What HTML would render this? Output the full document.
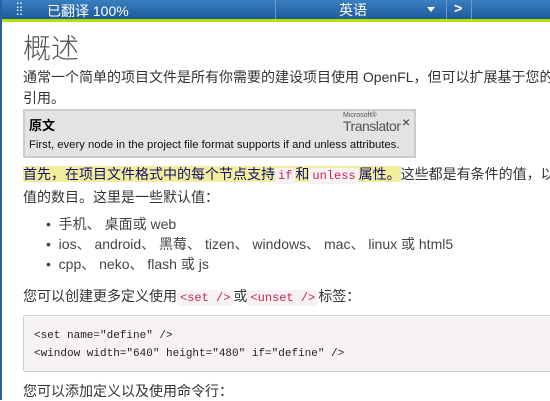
<!DOCTYPE html>
<html><head><meta charset="utf-8"><style>
*{margin:0;padding:0;box-sizing:border-box}
body{width:550px;height:400px;overflow:hidden;background:#fff;font-family:"Liberation Sans","Noto Sans CJK SC",sans-serif;color:#333;position:relative;font-size:14px}
.lb{position:absolute;left:0;top:0;width:2px;height:400px;background:#2a5fa8}
.bar{position:absolute;left:0;top:0;width:550px;height:19px;background:linear-gradient(#3a7fc0,#1e5a9a);color:#fff;font-size:13px}
.green{position:absolute;left:2px;top:19px;width:548px;height:3px;background:#b8e000}
.sep{position:absolute;top:0;width:1px;height:19px;background:#6a9acb}
.t{position:absolute;white-space:nowrap}
code{font-family:"Liberation Mono",monospace;color:#c7254e;background:#f9f2f4;font-size:12px;padding:1px 3px;border-radius:3px}
</style></head><body>
<div class="bar">
<div class="t" style="left:16px;top:2px;font-size:10px;line-height:7px;font-weight:bold">::<br>::</div>
<div class="t" style="left:47px;top:1px;font-size:14px">已翻译 100%</div>
<div class="sep" style="left:275px"></div>
<div class="t" style="left:339px;top:0px;font-size:14px">英语</div>
<div class="t" style="left:427px;top:7px;width:0;height:0;border-left:4px solid transparent;border-right:4px solid transparent;border-top:5px solid #fff"></div>
<div class="sep" style="left:446px"></div>
<div class="t" style="left:454px;top:0px;font-weight:bold;font-size:14px">&gt;</div>
<div class="sep" style="left:471px"></div>
</div>
<div class="green"></div>
<div class="lb"></div>
<div class="t" style="left:23px;top:27px;font-size:28px;font-weight:300;color:#555">概述</div>
<div class="t" style="left:23px;top:67px;line-height:21px">通常一个简单的项目文件是所有你需要的建设项目使用 OpenFL，但可以扩展基于您的<br>引用。</div>
<div class="t" style="left:23px;top:109px;width:393px;height:49px;background:#e3e3e3;border:2px solid #ccc"></div>
<div class="t" style="left:29px;top:115px;font-weight:bold;color:#000;font-size:13px">原文</div>
<div class="t" style="left:343px;top:112px;font-size:7px;color:#555">Microsoft®</div>
<div class="t" style="left:343px;top:118px;font-size:14px;color:#555;letter-spacing:-0.5px">Translator</div>
<div class="t" style="left:402px;top:114px;font-size:14px;color:#333">×</div>
<div class="t" style="left:29px;top:139px;font-size:11.3px;color:#111">First, every node in the project file format supports if and unless attributes.</div>
<div class="t" style="left:23px;top:164px;line-height:21px"><span style="background:#f2ee9c;color:#101070">首先，在项目文件格式中的每个节点支持<code>if</code>和<code>unless</code>属性。</span>这些都是有条件的值，以<br>值的数目。这里是一些默认值：</div>
<div class="t" style="left:46px;top:214px;line-height:20px;color:#444">•&nbsp;&nbsp;手机、 桌面或 web<br>•&nbsp;&nbsp;ios、 android、 黑莓、 tizen、 windows、 mac、 linux 或 html5<br>•&nbsp;&nbsp;cpp、 neko、 flash 或 js</div>
<div class="t" style="left:23px;top:286px">您可以创建更多定义使用<code>&lt;set /&gt;</code>或<code>&lt;unset /&gt;</code>标签：</div>
<div class="t" style="left:23px;top:315px;width:540px;height:57px;background:#f7f3f5;border:1px solid #ccc;border-radius:3px"></div>
<div class="t" style="left:34px;top:327px;font-family:'Liberation Mono',monospace;font-size:11px;line-height:18px;color:#222">&lt;set name="define" /&gt;<br>&lt;window width="640" height="480" if="define" /&gt;</div>
<div class="t" style="left:23px;top:381px">您可以添加定义以及使用命令行：</div>
</body></html>
